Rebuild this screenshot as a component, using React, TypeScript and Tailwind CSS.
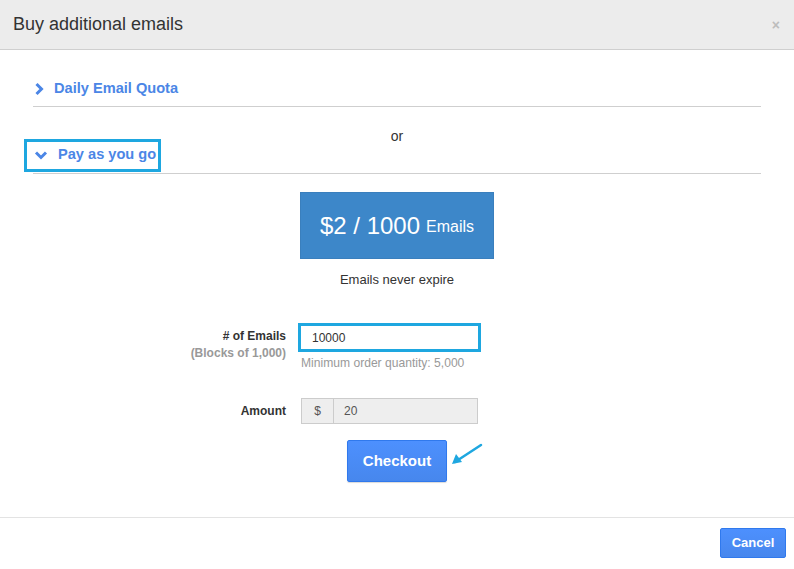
const ChevronRight = () => (
  <svg width="10" height="14" viewBox="0 0 10 14" className="shrink-0">
    <path d="M2.5 2 L7.5 7 L2.5 12" fill="none" stroke="#4b86e6" strokeWidth="3" />
  </svg>
);

const ChevronDown = () => (
  <svg width="14" height="10" viewBox="0 0 14 10" className="shrink-0">
    <path d="M2 2.5 L7 7.5 L12 2.5" fill="none" stroke="#4b86e6" strokeWidth="3" />
  </svg>
);

const App = () => {
  return (
    <div
      className="w-[794px] h-[569px] flex flex-col bg-white text-[#333]"
      style={{ fontFamily: '"Liberation Sans", Arial, sans-serif' }}
    >
      {/* header */}
      <div className="h-[50px] shrink-0 bg-[#ececec] border-b border-[#cfcfcf] flex items-center justify-between pl-[13px] pr-[14px]">
        <p className="text-[18px] text-[#333]">Buy additional emails</p>
        <span className="text-[14px] font-bold text-[#bdbdbd] leading-none">×</span>
      </div>

      {/* body */}
      <div className="flex-1 px-[33px] pt-[29px]">
        <div className="h-[28px] pb-[7px] border-b border-[#cfcfcf] flex items-start">
          <div className="h-[20px] flex items-center gap-[10px] pl-[1px]">
            <ChevronRight />
            <span className="text-[14.6px] font-bold text-[#4b86e6]">Daily Email Quota</span>
          </div>
        </div>

        <p className="mt-[21px] h-[16px] leading-[16px] text-[14px] text-center">or</p>

        <div className="relative h-[30px] pt-[1px] pb-[8px] border-b border-[#cfcfcf]">
          <div className="absolute left-[-9px] top-[-5px] w-[137px] h-[33px] border-[3px] border-[#1ea7e0]" />
          <div className="h-[20px] flex items-center gap-[10px] pl-[1px]">
            <ChevronDown />
            <span className="text-[14.6px] font-bold text-[#4b86e6]">Pay as you go</span>
          </div>
        </div>

        <div className="mt-[18px] flex justify-center">
          <div className="w-[194px] h-[67px] bg-[#3d87c9] border border-[#3a7fbd] flex items-center justify-center text-white gap-[6px]">
            <span className="text-[24px]">$2 / 1000</span>
            <span className="text-[16px] mt-[3px]">Emails</span>
          </div>
        </div>

        <p className="mt-[13px] text-[13px] leading-[16px] text-center text-[#333]">Emails never expire</p>

        <div className="mt-[35px] flex">
          <div className="w-[253px] pt-[5px] text-right text-[12px] font-bold leading-[17px]">
            <p className="text-[#333]">
              # of Emails
            </p>
            <p className="text-[#999]">(Blocks of 1,000)</p>
          </div>
          <div className="ml-[12px]">
            <div className="w-[183px] h-[29px] border-[3px] border-[#1ea7e0] bg-white flex items-center pl-[11px] text-[12px] text-[#333]">
              10000
            </div>
            <p className="mt-[3px] pl-[3px] text-[12.1px] leading-[16px] text-[#999]">
              Minimum order quantity: 5,000
            </p>
          </div>
        </div>

        <div className="mt-[27px] flex items-center">
          <p className="w-[253px] text-right text-[12px] font-bold text-[#333]">Amount</p>
          <div className="ml-[15px] flex h-[26px] w-[177px] border border-[#ccc] bg-[#eee] text-[12px] text-[#555]">
            <div className="w-[32px] flex items-center justify-center border-r border-[#ccc]">$</div>
            <div className="flex-1 flex items-center pl-[10px]">20</div>
          </div>
        </div>

        <div className="mt-[16px] flex justify-center">
          <div className="relative">
            <button className="w-[100px] h-[42px] rounded-[2px] border border-[#3079ed] bg-gradient-to-b from-[#4d90fe] to-[#4787ed] text-white text-[15px] font-bold shadow-[0_1px_1px_rgba(0,0,0,0.15)]">
              Checkout
            </button>
            <svg
              className="absolute left-[103px] top-[2px]"
              width="34"
              height="26"
              viewBox="0 0 34 26"
            >
              <path d="M31 3 L5 20" stroke="#1ea7e0" strokeWidth="2.5" fill="none" strokeLinecap="round" />
              <path d="M2 22 L6 12 L12 20 Z" fill="#1ea7e0" />
            </svg>
          </div>
        </div>
      </div>

      {/* footer */}
      <div className="h-[52px] shrink-0 border-t border-[#e3e3e3] flex items-start justify-end pt-[10px] pr-[8px]">
        <button className="w-[66px] h-[30px] rounded-[2px] border border-[#3079ed] bg-gradient-to-b from-[#4d90fe] to-[#4787ed] text-white text-[13px] font-bold">
          Cancel
        </button>
      </div>
    </div>
  );
};

export default App;
